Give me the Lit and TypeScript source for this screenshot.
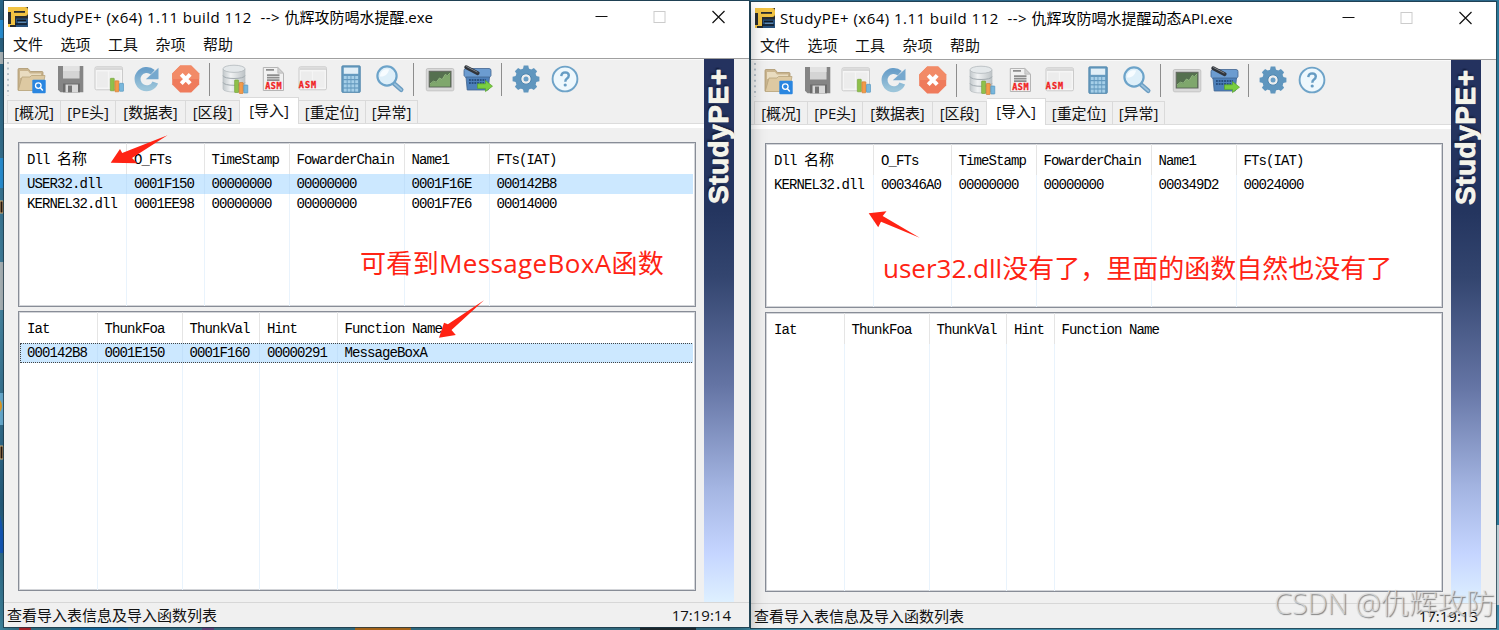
import { LitElement, html, svg, css, type SVGTemplateResult, type TemplateResult } from 'lit';
import { customElement, property } from 'lit/decorators.js';
import { classMap } from 'lit/directives/class-map.js';

interface Column {
  label: string | TemplateResult;
  width: number;
}

interface ListData {
  columns: Column[];
  rows: string[][];
  selected?: number;
  focused?: boolean;
}

interface WindowData {
  title: string;
  time: string;
  imports: ListData;
  functions: ListData;
}

const MENUS = ['文件', '选项', '工具', '杂项', '帮助'];

const TABS = [
  { label: '[概况]', width: 54 },
  { label: '[PE头]', width: 55 },
  { label: '[数据表]', width: 70 },
  { label: '[区段]', width: 54 },
  { label: '[导入]', width: 59, active: true },
  { label: '[重定位]', width: 67 },
  { label: '[异常]', width: 52 },
];

const importColumns: Column[] = [
  { label: html`Dll <span class="cjk">名称</span>`, width: 107 },
  { label: 'O_FTs', width: 77.5 },
  { label: 'TimeStamp', width: 85 },
  { label: 'FowarderChain', width: 115 },
  { label: 'Name1', width: 85 },
  { label: 'FTs(IAT)', width: 204 },
];

const functionColumns = (hint: number): Column[] => [
  { label: 'Iat', width: 77.5 },
  { label: 'ThunkFoa', width: 85 },
  { label: 'ThunkVal', width: 77.5 },
  { label: 'Hint', width: hint },
  { label: 'Function Name', width: 433.5 - hint },
];

const LEFT: WindowData = {
  title: '仇辉攻防喝水提醒.exe',
  time: '17:19:14',
  imports: {
    columns: importColumns,
    rows: [
      ['USER32.dll', '0001F150', '00000000', '00000000', '0001F16E', '000142B8'],
      ['KERNEL32.dll', '0001EE98', '00000000', '00000000', '0001F7E6', '00014000'],
    ],
    selected: 0,
  },
  functions: {
    columns: functionColumns(77.5),
    rows: [['000142B8', '0001E150', '0001F160', '00000291', 'MessageBoxA']],
    selected: 0,
    focused: true,
  },
};

const RIGHT: WindowData = {
  title: '仇辉攻防喝水提醒动态API.exe',
  time: '17:19:13',
  imports: {
    columns: importColumns,
    rows: [['KERNEL32.dll', '000346A0', '00000000', '00000000', '000349D2', '00024000']],
  },
  functions: { columns: functionColumns(47.5), rows: [] },
};

const bars = (x: number, y: number) => svg`
  <rect x=${x} y=${y} width="4" height="12.5" rx=".5" fill="#8fc04a" stroke="#6f9f36" stroke-width=".6" />
  <rect x=${x + 4.6} y=${y + 2.5} width="4" height="11" rx=".5" fill="#f39a4a" stroke="#c9762c" stroke-width=".6" />
  <rect x=${x + 9.2} y=${y + 5} width="4" height="8" rx=".5" fill="#78b7dc" stroke="#4c8fba" stroke-width=".6" />
`;

const frame = svg`
  <rect x="1" y="2.8" width="27.5" height="23" rx="1.5" fill="#f5f5f5" stroke="#cbcbcb" />
  <path d="M1.5 3.3h26.5v2.7h-26.5z" fill="#d8d8d8" />
  <rect x="3" y="7.5" width="10.8" height="16" fill="#ececec" />
  <rect x="15" y="7.5" width="11.5" height="16" fill="#eeeeee" />
`;

const icons: Record<string, SVGTemplateResult> = {
  open: svg`
    <path d="M2 26V5.5q0-1 1-1h9l2.5 3H26q1 0 1 1V26z" fill="#c9b48e" stroke="#ad9870" stroke-width=".8" />
    <path d="M4 7h8l2 2.5h11V14H4z" fill="#e9dcc0" />
    <path d="M2.2 26.5L6 13h8l1.5-1.5H29L26 26.5z" fill="#ddc9a2" stroke="#b9a47c" stroke-width=".8" />
    <rect x="16.3" y="15.8" width="13.4" height="13.4" rx="1" fill="#2a86e0" />
    <circle cx="22.3" cy="21.6" r="2.8" fill="none" stroke="#fff" stroke-width="1.3" />
    <path d="M24.4 23.8l2.4 2.6" stroke="#fff" stroke-width="1.5" />
  `,
  save: svg`
    <path d="M3 2h25.3v26.3H5.5L3 25.8z" fill="#858585" />
    <path d="M8 2h16.5v12.5H8z" fill="#d4d4d4" />
    <path d="M8 2h16.5v5H8z" fill="#e2e2e2" />
    <path d="M8 19.5h17v8.8H8z" fill="#6b6b6b" />
    <path d="M10.5 20.5h12.5v7.8H10.5z" fill="#d9d9d9" />
    <path d="M13 21.5h4v6.8h-4z" fill="#747474" />
  `,
  table: svg`${frame}${bars(16.3, 14.3)}`,
  refresh: svg`
    <path
      d="M23.3 18.5A9.2 9.2 0 1 1 20.8 8.2"
      fill="none" stroke="url(#blue)" stroke-width="6"
    />
    <path d="M26.5 3.8V15.2H13.8z" fill="#76a8ce" />
  `,
  stop: svg`
    <path d="M9.2 1.5h11l8 8v11l-8 8h-11l-8-8v-11z" fill="#ef7b5c" />
    <path d="M9.2 1.5h11l8 8v5.5h-27V9.5z" fill="#f28b67" />
    <path d="M10.2 10.4l9 9.2M19.2 10.4l-9 9.2" stroke="#fff" stroke-width="4" />
  `,
  database: svg`
    <path d="M3 5v20c0 4 22 4 22 0V5z" fill="url(#metal)" stroke="#b7bdc0" stroke-width=".7" />
    <ellipse cx="14" cy="4.8" rx="11" ry="3.6" fill="#e4e8ea" stroke="#b2b9bd" stroke-width=".8" />
    <path
      d="M3 11.5c0 4 22 4 22 0M3 18.3c0 4 22 4 22 0"
      fill="none" stroke="#a2aaaf" stroke-width="1"
    />
    ${bars(14.6, 16)}
  `,
  source: svg`
    <path d="M4.3 3.5h14.5l5.7 5.7v17.3H4.3z" fill="#f1f1f1" stroke="#b5b5b5" />
    <path d="M18.8 3.5v5.7h5.7z" fill="#d0d0d0" stroke="#b5b5b5" stroke-width=".7" />
    <path d="M7 5.8h8M8 11.2h12.5M8 13.7h12.5M8 16.2h12.5" stroke="#8d8d8d" stroke-width="1.8" />
    <text class="asm" x="6.2" y="24.9" textLength="16.4">ASM</text>
  `,
  disasm: svg`${frame}<text class="asm" x=".8" y="24.2" textLength="17.4">ASM</text>`,
  calc: svg`
    <rect x="4.8" y="1.8" width="18.5" height="26.6" rx="1" fill="#659abf" stroke="#4b83aa" stroke-width=".8" />
    <rect x="6.8" y="3.6" width="14.4" height="6.2" fill="#e2eff7" />
    ${[12, 16.2, 20.4, 24.6].map((y) =>
      [6.8, 10.6, 14.4, 18.2].map(
        (x) => svg`<rect x=${x} y=${y} width="2.9" height="3" fill="#a6cfe8" />`,
      ),
    )}
  `,
  search: svg`
    <path d="M19 19.5l7.2 6.2" stroke="#6c9dc2" stroke-width="4.6" stroke-linecap="round" />
    <path d="M19.5 19.8l6.8 6" stroke="#9cc3de" stroke-width="1.8" stroke-linecap="round" />
    <circle cx="12" cy="12" r="9.6" fill="#deeff9" stroke="#6ca3c9" stroke-width="2.2" />
    <path d="M5 12.5a7 7 0 0 1 9.2-7c-1.5 4.8-4.2 7.4-9.2 7z" fill="#f7fcff" />
  `,
  monitor: svg`
    <rect x="1.3" y="4.5" width="27.5" height="22.3" rx="1.5" fill="#d9d9d9" stroke="#c4c4c4" />
    <rect x="4.2" y="7.3" width="21.8" height="15.7" fill="#55704f" stroke="#61665e" />
    <path d="M5 20.5l3.3-2.8 3 1 3.2-4.2 2.6 1.6 3.2-5.2 2 1.3 2.8-2.8v13H5z" fill="#7fa76c" />
    <path
      d="M5 20l3.3-2.8 3 1 3.2-4.2 2.6 1.6 3.2-5.2 2 1.3 2.8-2.8"
      fill="none" stroke="#a0c98a" stroke-width=".8"
    />
  `,
  basket: svg`
    <path d="M1 6.5q0-2 2-2h23q2 0 2 2v5L26.2 14H3.2L1 11.5z" fill="#6c9cd0" stroke="#41658f" stroke-width=".8" />
    <path d="M3 13h23.5l-1.3 13H4.2z" fill="#4d80ba" stroke="#41658f" stroke-width=".8" />
    <path d="M6 16h17M6 19h15" stroke="#284f80" stroke-width="1.8" stroke-dasharray="1.8 .9" />
    <path d="M3.2 3.2l11.5 6" stroke="#30343a" stroke-width="3.8" stroke-linecap="round" />
    <path d="M3.6 2.6l10.5 5.4" stroke="#888d92" stroke-width=".9" stroke-linecap="round" />
    <path d="M14.5 19.8h8v-3.2l7 5.6-7 5.4v-3.2h-8z" fill="#79ce40" stroke="#57a22a" stroke-width=".7" />
  `,
  gear: svg`
    <g fill="#6096be">
      <circle cx="15" cy="15" r="10.8" />
      ${[0, 45, 90, 135, 180, 225, 270, 315].map(
        (a) => svg`<path d="M11.8 6l.9-4.4h4.6L18.2 6z" transform="rotate(${a} 15 15)" />`,
      )}
    </g>
    <circle cx="15" cy="15" r="5.2" fill="#efefef" stroke="#4c84ae" stroke-width="1" />
    <circle cx="15" cy="15" r="2.5" fill="#6a9fc6" />
  `,
  help: svg`
    <circle cx="15" cy="15" r="12.4" fill="#eef8fd" stroke="#6ea3c8" stroke-width="1.9" />
    <path
      d="M11.3 12.2q.3-3.8 3.9-3.8 3.6.1 3.6 3.2 0 1.7-1.8 2.9-1.7 1.1-1.7 3.2"
      fill="none" stroke="#669cc3" stroke-width="2.4"
    />
    <circle cx="15.2" cy="21" r="1.6" fill="#669cc3" />
  `,
};

const TOOL_GROUPS = [
  ['open', 'save', 'table', 'refresh', 'stop'],
  ['database', 'source', 'disasm', 'calc', 'search'],
  ['monitor', 'basket'],
  ['gear', 'help'],
];

@customElement('pe-list')
export class PeList extends LitElement {
  @property({ attribute: false }) data!: ListData;

  static styles = css`
    :host {
      display: block;
      box-sizing: border-box;
      border: 1px solid #888d97;
      box-shadow: inset 0 0 0 1px #d3d5d9;
      background: #fff;
      padding: 0 2px 0 1px;
      font: 14px/21px 'Liberation Mono', 'Noto Sans CJK SC', monospace;
      letter-spacing: -0.9px;
      color: #000;
    }
    .list {
      display: grid;
      grid-template-rows: 31px auto 1fr;
      height: 100%;
      overflow: hidden;
    }
    .line {
      display: flex;
    }
    .cell {
      flex: none;
      box-sizing: border-box;
      height: 20px;
      padding-left: 7px;
      border-right: 1px solid #e9f3fc;
      white-space: pre;
      overflow: hidden;
    }
    .header .cell {
      height: 31px;
      padding-top: 7px;
      border-right-color: #e5e5e5;
    }
    .rest .cell {
      height: auto;
    }
    .cjk {
      font-size: 15px;
      letter-spacing: 0;
    }
    .selected {
      background: #cce8ff;
    }
    .selected .cell {
      border-right-color: #c2e0fa;
    }
    .focused {
      outline: 1px dotted #444;
      outline-offset: -1px;
    }
  `;

  private renderCells(texts: Array<string | TemplateResult>) {
    return this.data.columns.map(
      (col, i) => html`<div class="cell" style="width:${col.width}px">${texts[i] ?? ''}</div>`,
    );
  }

  render() {
    const { columns, rows, selected, focused } = this.data;
    return html`
      <div class="list">
        <div class="line header">${this.renderCells(columns.map((c) => c.label))}</div>
        <div>
          ${rows.map(
            (row, i) => html`
              <div
                class=${classMap({
                  line: true,
                  selected: i === selected,
                  focused: i === selected && !!focused,
                })}
              >
                ${this.renderCells(row)}
              </div>
            `,
          )}
        </div>
        <div class="line rest">${this.renderCells([])}</div>
      </div>
    `;
  }
}

@customElement('pe-window')
export class PeWindow extends LitElement {
  @property({ attribute: false }) data!: WindowData;

  static styles = css`
    :host {
      display: flex;
      flex-direction: column;
      width: 745px;
      height: 626px;
      background: #f0f0f0;
      font: 15px/20px 'Open Sans', 'Noto Sans CJK SC', sans-serif;
      color: #111;
    }
    .title {
      display: flex;
      align-items: center;
      height: 31px;
      padding: 0 1.5px 0 4px;
      background: #fff;
      color: #000;
    }
    .title .logo {
      width: 20px;
      height: 20px;
      margin-right: 5px;
    }
    .caption {
      flex: 1;
      white-space: pre;
    }
    .product {
      letter-spacing: 0.46px;
    }
    .controls {
      display: flex;
    }
    .controls svg {
      width: 58.5px;
      height: 31px;
    }
    .menu {
      display: flex;
      gap: 17.5px;
      height: 26px;
      padding-left: 9px;
      line-height: 25px;
      background: #fff;
      border-bottom: 1px solid #a0a0a0;
    }
    .body {
      flex: 1;
      display: flex;
      min-height: 0;
    }
    .main {
      width: 700px;
      display: flex;
      flex-direction: column;
    }
    .toolbar {
      display: flex;
      align-items: center;
      height: 38px;
      padding-top: 1px;
      box-sizing: border-box;
      border-top: 1px solid #fafafa;
    }
    .grip {
      width: 2px;
      height: 34px;
      margin: 0 3px 0 2.7px;
      background: radial-gradient(circle at 1px 1px, #b4bec6 1px, transparent 1.3px) 0 0 / 3px 5.6px;
    }
    .tool {
      flex: none;
      width: 38.75px;
      display: flex;
      justify-content: center;
    }
    .tool svg {
      width: 30px;
      height: 30px;
      overflow: visible;
    }
    .asm {
      font: bold 8.5px 'DejaVu Sans Mono', monospace;
      fill: #f02424;
      stroke: #f02424;
      stroke-width: 0.3px;
    }
    .sep {
      flex: none;
      width: 1px;
      height: 33px;
      margin: 0 6px 0 3.5px;
      background: #8d8d8d;
    }
    .sep.last {
      margin-right: 4.5px;
    }
    .tabs {
      display: flex;
      align-items: flex-end;
      height: 26px;
      padding-left: 3px;
      border-bottom: 1px solid #dcdcdc;
      letter-spacing: -0.1px;
    }
    .tab {
      box-sizing: border-box;
      height: 23px;
      padding-top: 1px;
      border: 1px solid #dadada;
      border-width: 1px 1px 0 0;
      text-align: center;
      white-space: nowrap;
      background: #f0f0f0;
    }
    .tab:first-child {
      border-left-width: 1px;
    }
    .tab.active {
      height: 27px;
      margin-bottom: -1px;
      padding-top: 1.5px;
      background: #fff;
    }
    .page {
      flex: 1;
      display: flex;
      flex-direction: column;
      gap: 4px;
      padding: 14px 8px 11px 14px;
      border-top: 4px solid #fff;
    }
    .imports {
      height: 165px;
    }
    .functions {
      flex: 1;
    }
    .banner {
      width: 30px;
      background: linear-gradient(
        #24325f,
        #24355f 28%,
        #33456f 40%,
        #6474a4 60%,
        #a4b5e2 79%,
        #c5d5ff 91%,
        #def0ff
      );
      color: #f4f4ea;
      font: bold 28px/30px 'Liberation Sans', sans-serif;
      letter-spacing: 0.5px;
      text-shadow:
        0 0 1px #fff,
        2px -1px 2px #0d1631;
    }
    .banner span {
      display: block;
      height: 145px;
      writing-mode: vertical-rl;
      transform: rotate(180deg);
      -webkit-text-stroke: 0.6px #f4f4ea;
    }
    .status {
      display: flex;
      justify-content: space-between;
      height: 24px;
      padding: 0 18px 0 3px;
      border-top: 1px solid #d7d7d7;
      line-height: 24px;
    }
  `;

  render() {
    const { title, time, imports, functions } = this.data;
    return html`
      <div class="title">
        <svg class="logo" viewBox="0 0 20 20">
          <rect width="20" height="20" fill="#292c30" />
          <path d="M0 0h17q3 0 3 3v3q0 3-3 3H7v9H2v2H0v-3h3V5H0z" fill="#f2c343" />
          <path d="M6 4h11v1.8H6z" fill="#292c30" />
          <path d="M0 5h3v12H0z" fill="#292c30" />
          <path d="M8 11.5h12V20H8z" fill="#29527e" />
          <path d="M9 13.5h9M7 17h12" stroke="#121a24" stroke-width="1.5" />
          <path d="M10 15.3h8" stroke="#7da9d1" stroke-width=".8" />
        </svg>
        <div class="caption"><span class="product">StudyPE+ (x64) 1.11 build 112  --&gt; </span>${title}</div>
        <div class="controls">
          <svg viewBox="0 0 58.5 31"><path d="M23.5 15.5h12" stroke="#111" /></svg>
          <svg viewBox="0 0 58.5 31">
            <rect x="23" y="10.5" width="11" height="11" fill="none" stroke="#ccc" />
          </svg>
          <svg viewBox="0 0 58.5 31">
            <path d="M23.5 10l12 12m0-12l-12 12" stroke="#111" stroke-width="1.2" />
          </svg>
        </div>
      </div>
      <div class="menu">${MENUS.map((m) => html`<span>${m}</span>`)}</div>
      <div class="body">
        <div class="main">
          <div class="toolbar">
            <div class="grip"></div>
            ${TOOL_GROUPS.map(
              (group, i) => html`
                ${i
                  ? html`<div class=${classMap({ sep: true, last: i === TOOL_GROUPS.length - 1 })}></div>`
                  : ''}
                ${group.map((name) => this.renderTool(name))}
              `,
            )}
          </div>
          <div class="tabs">
            ${TABS.map(
              (t) => html`
                <div
                  class=${classMap({ tab: true, active: !!t.active })}
                  style="width:${t.width}px"
                >${t.label}</div>
              `,
            )}
          </div>
          <div class="page">
            <pe-list class="imports" .data=${imports}></pe-list>
            <pe-list class="functions" .data=${functions}></pe-list>
          </div>
        </div>
        <div class="banner"><span>StudyPE+</span></div>
      </div>
      <div class="status"><span>查看导入表信息及导入函数列表</span><span>${time}</span></div>
    `;
  }

  private renderTool(name: string) {
    return html`
      <div class="tool">
        <svg viewBox="0 0 30 30">
          <defs>
            <linearGradient id="blue" x2="0" y2="1">
              <stop stop-color="#6a9fc9" />
              <stop offset="1" stop-color="#9cc5da" />
            </linearGradient>
            <linearGradient id="metal">
              <stop stop-color="#c2c8cb" />
              <stop offset=".35" stop-color="#f0f2f3" />
              <stop offset="1" stop-color="#bdc3c6" />
            </linearGradient>
          </defs>
          ${icons[name]}
        </svg>
      </div>
    `;
  }
}

@customElement('app-root')
export class AppRoot extends LitElement {
  static styles = css`
    :host {
      display: block;
      position: relative;
      width: 1499px;
      height: 630px;
      overflow: hidden;
      background: #27536a;
    }
    .desktop {
      display: block;
      width: 1499px;
      height: 630px;
    }
    pe-window {
      position: absolute;
    }
    .left {
      left: 4px;
      top: 1px;
      z-index: 1;
      box-shadow:
        0 0 0 1px rgba(30, 55, 70, 0.75),
        0 8px 16px rgba(0, 0, 0, 0.35);
    }
    .right {
      left: 751px;
      top: 2px;
      box-shadow: 0 0 0 1px rgba(30, 55, 70, 0.75);
    }
    .note {
      position: absolute;
      z-index: 2;
      color: #ff2314;
      font: 26px/36px 'Open Sans', 'Noto Sans CJK SC', sans-serif;
      white-space: nowrap;
    }
    .note-left {
      left: 360px;
      top: 245px;
      letter-spacing: 0.36px;
    }
    .note-right {
      left: 883px;
      top: 250px;
    }
    .arrows {
      position: absolute;
      inset: 0;
      z-index: 2;
      fill: #ff2314;
    }
    .watermark {
      position: absolute;
      z-index: 3;
      left: 1274px;
      top: 585px;
      font: 300 28.5px/36px 'Open Sans', 'Noto Sans CJK SC', sans-serif;
      white-space: nowrap;
      color: rgba(222, 222, 222, 0.75);
      text-shadow: 1px 1px 1px rgba(90, 90, 90, 0.75);
    }
  `;

  render() {
    return html`
      <svg class="desktop" viewBox="0 0 1499 630">
        <defs>
          <linearGradient id="sky" x2="0" y2="1">
            <stop stop-color="#2a6688" />
            <stop offset=".5" stop-color="#4c91b0" />
            <stop offset=".8" stop-color="#286488" />
            <stop offset="1" stop-color="#438faa" />
          </linearGradient>
        </defs>
        <rect width="1499" height="630" fill="url(#sky)" />
        <path d="M0 20h4v18H0zM0 158h4v30H0z" fill="#2c9ce6" />
        <path d="M0 52h4v12H0zM0 262h4v48H0z" fill="#b9c4c8" />
        <path d="M0 201h3v12H0zM0 446h3v13H0z" fill="#2a1a12" stroke="#e9c58a" />
        <path d="M0 393h4v32H0z" fill="#72bce4" />
        <path d="M0 400q4 6 0 12z" fill="#f5a928" />
        <path d="M0 515q4 15 4 38H0z" fill="#155fc7" />
        <path d="M19 627h12v3H19z" fill="#dc2d35" />
        <path d="M71 627h57v3H71z" fill="#1d88ce" />
        <path d="M202 627h12v3h-12z" fill="#74569f" />
        <path d="M355 627h56v3h-56z" fill="#df8722" />
        <path d="M640 627h56v3h-56z" fill="#27353c" />
        <path d="M1496 0h3v525h-3z" fill="#2b7797" />
        <path d="M1496 525h3v80h-3z" fill="#b7ccd3" />
      </svg>
      <pe-window class="left" .data=${LEFT}></pe-window>
      <pe-window class="right" .data=${RIGHT}></pe-window>
      <svg class="arrows" width="1499" height="630">
        <path d="M110.7 162.8L120 149l2.2 3.9L167.5 135.3 132 158l5.3 5.2z" />
        <path d="M439 337.8L444 322.7l3.9 1.5L484 300.3 451.5 330l4.3 5z" />
        <path d="M868.7 213.3l17.8-2-3.8 4.7 37 21.7-38.7-16-2.8 5.6z" />
      </svg>
      <div class="note note-left">可看到MessageBoxA函数</div>
      <div class="note note-right">user32.dll没有了，里面的函数自然也没有了</div>
      <div class="watermark">CSDN @仇辉攻防</div>
    `;
  }
}
